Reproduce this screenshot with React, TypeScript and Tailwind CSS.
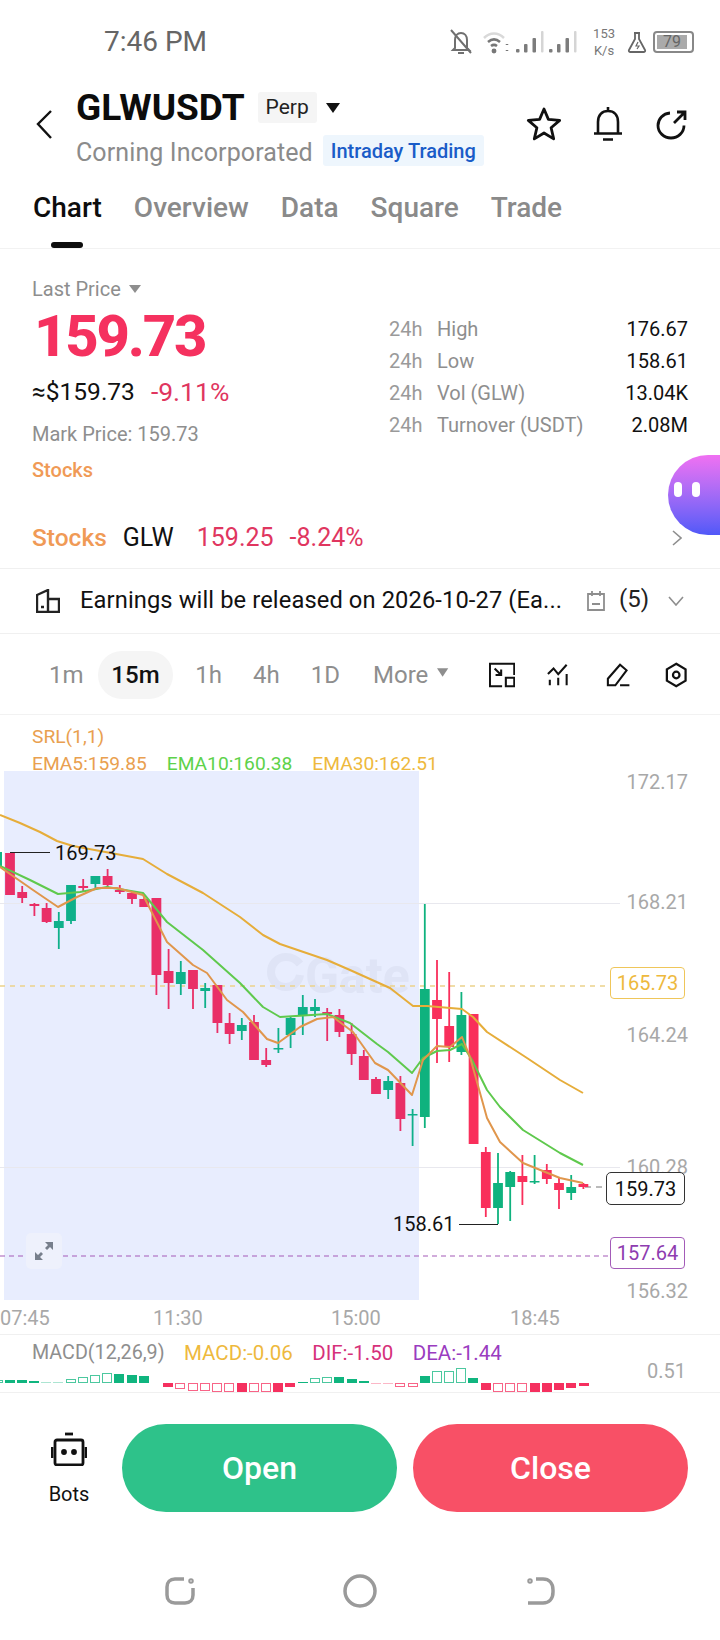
type Candle = [number, number, number, number];
type Bar = [number, number, "g" | "r", "f" | "h" | "t"];

// high, body top, body bottom, low (page y); colour per index below
const candles: Candle[] = [
  [853, 853, 895, 895], [886, 892, 898, 903], [903, 904, 906, 916], [903, 908, 922, 923],
  [912, 921, 928, 949], [885, 885, 921, 924], [879, 886, 888, 891], [876, 876, 884, 888],
  [869, 876, 885, 887], [885, 890, 892, 894], [892, 893, 899, 904], [895, 899, 907, 907],
  [898, 898, 975, 995], [949, 971, 983, 1009], [961, 972, 984, 995], [970, 970, 989, 1009],
  [983, 988, 991, 1008], [985, 985, 1023, 1033], [1013, 1023, 1034, 1044], [1018, 1025, 1031, 1040],
  [1015, 1022, 1060, 1060], [1048, 1060, 1065, 1067], [1028, 1048, 1049, 1053], [1017, 1018, 1035, 1048],
  [995, 1007, 1015, 1035], [999, 1007, 1011, 1017], [1008, 1012, 1014, 1041], [1009, 1015, 1032, 1037],
  [1023, 1034, 1054, 1065], [1050, 1056, 1080, 1080], [1077, 1079, 1094, 1094], [1076, 1081, 1090, 1099],
  [1076, 1083, 1119, 1131], [1109, 1114, 1115, 1146], [904, 989, 1117, 1128], [960, 1000, 1019, 1063],
  [972, 1026, 1047, 1062], [992, 1015, 1052, 1055], [1014, 1014, 1144, 1144], [1147, 1152, 1208, 1217],
  [1153, 1183, 1208, 1224], [1171, 1172, 1187, 1221], [1155, 1176, 1182, 1205], [1155, 1181, 1182, 1184],
  [1164, 1170, 1179, 1184], [1178, 1183, 1190, 1209], [1175, 1187, 1193, 1200], [1183, 1184, 1187, 1189],
];
const greenCandles = [4, 5, 7, 14, 16, 19, 22, 23, 24, 25, 31, 33, 34, 37, 40, 41, 43, 46];

const lineGold =
  "0,815 20,823 40,832 57,841 73,846 100,851 143,859 167,874 203,893 240,917 263,935 280,944 327,960 350,970 390,988 413,1006 427,1006 462,1009 473,1017 487,1032 527,1058 560,1080 583,1093";
const lineGreen =
  "0,866 30,880 58,894 80,892 107,887 143,893 167,922 203,950 240,983 263,1007 280,1017 327,1014 350,1023 377,1044 388,1052 412,1073 423,1058 437,1051 450,1050 462,1044 472,1060 487,1090 500,1107 523,1130 560,1153 583,1165";
const lineOrange =
  "0,867 33,890 58,907 77,897 97,888 117,888 143,895 167,942 193,965 207,973 227,1000 243,1012 267,1039 278,1043 300,1027 317,1019 333,1017 353,1032 375,1063 388,1070 412,1095 423,1060 437,1046 450,1047 462,1037 470,1057 487,1118 500,1142 523,1163 560,1178 583,1183";

const macdBars: Bar[] = [
  [-2, 3, "g", "h"], [10, 3, "g", "f"], [22, 3, "g", "f"], [34, 2, "g", "f"], [46, 1, "g", "t"], [58, 1, "g", "t"],
  [71, 4, "g", "h"], [83, 6, "g", "h"], [95, 8, "g", "h"], [107, 10, "g", "h"], [119, 9, "g", "f"], [132, 8, "g", "f"], [144, 7, "g", "f"],
  [168, 4, "r", "f"], [180, 6, "r", "h"], [193, 8, "r", "h"], [205, 8, "r", "h"], [217, 9, "r", "h"], [229, 9, "r", "h"], [242, 9, "r", "f"],
  [254, 9, "r", "h"], [266, 9, "r", "h"], [278, 9, "r", "f"], [290, 4, "r", "f"],
  [303, 1, "g", "f"], [315, 5, "g", "h"], [327, 6, "g", "h"], [339, 6, "g", "f"], [352, 4, "g", "f"], [364, 2, "g", "f"],
  [376, 1, "r", "t"], [388, 1, "r", "t"], [400, 4, "r", "h"], [413, 4, "r", "h"],
  [425, 7, "g", "f"], [437, 12, "g", "h"], [449, 12, "g", "h"], [461, 15, "g", "h"], [473, 5, "g", "f"],
  [486, 7, "r", "f"], [498, 9, "r", "h"], [510, 9, "r", "h"], [522, 9, "r", "h"], [535, 9, "r", "f"], [547, 9, "r", "f"], [559, 7, "r", "f"], [571, 5, "r", "f"], [584, 3, "r", "f"],
];

const stats = [
  { label: "High", value: "176.67" },
  { label: "Low", value: "158.61" },
  { label: "Vol (GLW)", value: "13.04K" },
  { label: "Turnover (USDT)", value: "2.08M" },
];

const Signal = () => (
  <svg width="30" height="26" viewBox="0 0 30 26" fill="#7c7c7c">
    <rect x="0" y="20" width="3.500" height="3.500" rx="1" />
    <rect x="8" y="15" width="3.500" height="8.500" rx="1" />
    <rect x="16.500" y="9" width="3.500" height="14.500" rx="1" />
    <rect x="25" y="2" width="2.500" height="21.500" rx="1" fill="#d5d5d5" />
  </svg>
);

const StatusBar = () => (
  <div className="h-[82px] flex items-center pl-[104px] pr-[26px] pt-[1px]">
    <span className="text-[28px] text-[#666666]">7:46 PM</span>
    <div className="ml-auto flex items-center">
      <svg width="24" height="26" viewBox="0 0 24 26" fill="none" stroke="#707070" strokeWidth="2">
        <path d="M6 19V11c0-4 2.500-7 6-7s6 3 6 7v8l2 2H4z" />
        <path d="M9 24h6M2 1l20 23" />
      </svg>
      <svg className="ml-[10px]" width="27" height="26" viewBox="0 0 27 26" fill="none" stroke="#777777" strokeWidth="2.500">
        <path d="M1 9c6-6 14-6 20 0" stroke="#d9d9d9" />
        <path d="M5 13c4-3.500 8-3.500 12 0M8 17c2-1.500 4-1.500 6 0" />
        <circle cx="11" cy="22" r="1.200" />
        <path d="M24 15v1M24 21v1" />
      </svg>
      <div className="ml-[6px]"><Signal /></div>
      <div className="ml-[3px]"><Signal /></div>
      <div className="ml-[14px] flex flex-col items-center text-[13px] leading-[17px] text-[#777777]">
        <span>153</span>
        <span>K/s</span>
      </div>
      <svg className="ml-[12px]" width="20" height="22" viewBox="0 0 20 22" fill="none" stroke="#666666" strokeWidth="1.800">
        <path d="M7 2h6M8 2v6L2 19c-.5 1 0 2 1 2h14c1 0 1.500-1 1-2L12 8V2" />
        <path d="M11 11l-2 4h3l-2 3" strokeWidth="1.200" />
      </svg>
      <div className="ml-[6px] w-[41px] h-[22px] rounded-[4px] border-2 border-[#888888] p-[2px] flex">
        <div className="w-[30px] bg-[#aaaaaa] flex items-center justify-center text-[16px] leading-none text-[#666666]">79</div>
      </div>
    </div>
  </div>
);

const Header = () => (
  <div className="h-[96px] flex pl-[35px] pr-[33px]">
    <svg className="mt-[27px]" width="18" height="30" viewBox="0 0 18 30" fill="none" stroke="#111111" strokeWidth="2.400">
      <path d="M16 2L3 15l13 14" />
    </svg>
    <div className="ml-[23px] mt-[9px] flex flex-col">
      <div className="flex items-center h-[33px]">
        <span className="text-[37px] font-bold leading-none text-[#0c0c0c]">GLWUSDT</span>
        <span className="ml-[13px] h-[31px] px-[8px] flex items-center rounded-[3px] bg-[#f5f5f5] text-[21px] text-[#222222]">Perp</span>
        <svg className="ml-[9px]" width="14" height="10" viewBox="0 0 14 10" fill="#111111"><path d="M0 0h14L7 10z" /></svg>
      </div>
      <div className="flex items-center mt-[11px] h-[31px]">
        <span className="mt-[4px] text-[25px] tracking-[0.1px] text-[#8b8b8b]">Corning Incorporated</span>
        <span className="ml-[10px] h-[31px] px-[8px] flex items-center rounded-[3px] bg-[#eef6fd] text-[20px] font-medium text-[#1a5cc8]">Intraday Trading</span>
      </div>
    </div>
    <div className="ml-auto mt-[25px] flex items-start">
      <svg width="36" height="34" viewBox="0 0 36 34" fill="none" stroke="#111111" strokeWidth="2.800" strokeLinejoin="round">
        <path d="M18 2l4.400 10.400 11.300 1-8.600 7.400 2.600 11.100L18 26l-9.700 5.900 2.600-11.100-8.600-7.400 11.300-1z" />
      </svg>
      <svg className="ml-[31px]" width="30" height="34" viewBox="0 0 30 34" fill="none" stroke="#111111" strokeWidth="2.600">
        <path d="M15 0v4M5 26V15C5 8 9 4 15 4s10 4 10 11v11M1 26.500h28M10 32.500h10" />
      </svg>
      <svg className="ml-[33px] mt-[3px]" width="31" height="30" viewBox="0 0 31 30" fill="none" stroke="#111111" strokeWidth="2.800">
        <path d="M14 3C7 3.500 2 9 2 15.500 2 22.500 8 28 15 28s13-5.500 13-12.500" />
        <path d="M18 13L29 2M21 2h8v8" />
      </svg>
    </div>
  </div>
);

const Tabs = () => (
  <div className="h-[71px] flex pl-[33px] gap-[32px] border-b border-[#f2f2f2]">
    <div className="flex flex-col items-center">
      <span className="text-[28px] leading-[60px] font-medium text-[#0d0d0d]">Chart</span>
      <span className="mt-[4px] w-[32px] h-[6px] rounded-full bg-[#0d0d0d]"></span>
    </div>
    <span className="text-[28px] leading-[60px] font-medium text-[#8a8a8a]">Overview</span>
    <span className="text-[28px] leading-[60px] font-medium text-[#8a8a8a]">Data</span>
    <span className="text-[28px] leading-[60px] font-medium text-[#8a8a8a]">Square</span>
    <span className="text-[28px] leading-[60px] font-medium text-[#8a8a8a]">Trade</span>
  </div>
);

const PriceInfo = () => (
  <div className="h-[259px] flex pl-[32px] pr-[32px]">
    <div className="flex flex-col">
      <div className="mt-[28px] flex items-center h-[24px]">
        <span className="text-[20px] text-[#8e8e8e]">Last Price</span>
        <svg className="ml-[8px]" width="12" height="8" viewBox="0 0 12 8" fill="#8e8e8e"><path d="M0 0h12L6 8z" /></svg>
      </div>
      <span className="mt-[2px] ml-[2px] text-[58px] leading-[66px] font-extrabold text-[#f5315f] tracking-[-2.200px]">159.73</span>
      <div className="mt-[8px] flex items-center h-[30px]">
        <span className="text-[24.500px] text-[#111111]">≈$159.73</span>
        <span className="ml-[16px] text-[26.500px] text-[#e0365f]">-9.11%</span>
      </div>
      <span className="mt-[14px] text-[20px] leading-[26px] text-[#8e8e8e]">Mark Price: 159.73</span>
      <span className="mt-[10px] text-[20px] leading-[26px] font-medium text-[#f09a56]">Stocks</span>
    </div>
    <div className="ml-auto mt-[64px] w-[299px] flex flex-col">
      {stats.map((row) => (
        <div key={row.label} className="h-[32px] flex items-center text-[20px]">
          <span className="w-[48px] text-[#9a9a9a]">24h</span>
          <span className="text-[#8e8e8e]">{row.label}</span>
          <span className="ml-auto text-[#111111]">{row.value}</span>
        </div>
      ))}
    </div>
  </div>
);

const StocksRow = () => (
  <div className="h-[61px] flex items-center pl-[32px] pr-[38px] border-b border-[#f0f0f0] text-[25px]">
    <span className="text-[24.500px] font-medium text-[#f09a56]">Stocks</span>
    <span className="ml-[16px] text-[#111111]">GLW</span>
    <span className="ml-[23px] text-[#e0365f]">159.25</span>
    <span className="ml-[16px] text-[#e0365f]">-8.24%</span>
    <svg className="ml-auto" width="10" height="16" viewBox="0 0 10 16" fill="none" stroke="#8e8e8e" strokeWidth="1.600"><path d="M1 1l8 7-8 7" /></svg>
  </div>
);

const EarningsRow = () => (
  <div className="h-[65px] flex items-center pl-[36px] pr-[36px] border-b border-[#f0f0f0]">
    <svg width="24" height="24" viewBox="0 0 24 24" fill="none" stroke="#222222" strokeWidth="2.400">
      <path d="M1 23V6l11-5v22zM12 10h11v13H1M5 18h3" />
    </svg>
    <span className="ml-[20px] w-[481px] text-[23.700px] tracking-[0.11px] text-[#111111] whitespace-nowrap">Earnings will be released on 2026-10-27 (Ea...</span>
    <svg className="ml-[26px]" width="18" height="20" viewBox="0 0 18 20" fill="none" stroke="#8e8e8e" strokeWidth="1.800">
      <path d="M1 3h16v16H1zM5 0v5M13 0v5M5 13h8" />
    </svg>
    <span className="ml-[14px] text-[24px] text-[#222222] -mt-[4px]">(5)</span>
    <svg className="ml-auto" width="16" height="10" viewBox="0 0 16 10" fill="none" stroke="#8e8e8e" strokeWidth="1.600"><path d="M1 1l7 8 7-8" /></svg>
  </div>
);

const TimeframeRow = () => (
  <div className="h-[81px] flex items-center pl-[49px] pr-[33px] pt-[1px] border-b border-[#f2f2f2] text-[24px] text-[#8e8e8e]">
    <span>1m</span>
    <span className="ml-[14px] w-[81px] h-[48px] rounded-full bg-[#f5f5f5] flex items-center justify-center font-medium text-[#111111]">15m</span>
    <span className="ml-[22px]">1h</span>
    <span className="ml-[31px]">4h</span>
    <span className="ml-[31px]">1D</span>
    <span className="ml-[33px]">More</span>
    <svg className="ml-[9px] -mt-[4px]" width="12" height="9" viewBox="0 0 12 9" fill="#8e8e8e"><path d="M0 0h12L6 9z" /></svg>
    <svg className="ml-[40px]" width="28" height="26" viewBox="0 0 28 26" fill="none" stroke="#111111" strokeWidth="2.200">
      <path d="M14 25H1V1h26v12M6 6l7 7M13 7v6H7M18 16h9v9h-9z" />
    </svg>
    <svg className="ml-[32px]" width="24" height="24" viewBox="0 0 24 24" fill="none" stroke="#111111" strokeWidth="2.200">
      <path d="M1 11l6-6 5 6 9-10M3 17v6M12 15v8M21 11v12" />
    </svg>
    <svg className="ml-[37px]" width="26" height="26" viewBox="0 0 26 26" fill="none" stroke="#111111" strokeWidth="2.200">
      <path d="M2 24v-7L15 2l7 6L10 24zM15 24h10" />
    </svg>
    <svg className="ml-[34px]" width="24" height="26" viewBox="0 0 24 26" fill="none" stroke="#111111" strokeWidth="2.400">
      <path d="M12 1l10 6v12l-10 6-10-6V7z" />
      <circle cx="12" cy="13" r="3.500" />
    </svg>
  </div>
);

const CandleChart = () => (
  <svg className="block" width="720" height="619" viewBox="0 715 720 619">
    <rect x="4" y="771" width="415" height="529" fill="#e8edfe" />
    <path d="M0 903.500H620M0 1167.500H620" stroke="#e8e8ee" strokeWidth="1" />
    <path d="M300 964c-4-5-9-7-14-7-9 0-15 7-15 15s6 15 15 15c7 0 13-5 14-12" fill="none" stroke="#dfe4f6" strokeWidth="8" />
    <text x="305" y="993" fontSize="50" fontWeight="700" fill="#dfe4f6">Gate</text>
    <path d="M0 986H610" stroke="#ecd28a" strokeWidth="1.500" strokeDasharray="5 5" />
    <path d="M0 1256H610" stroke="#a35bb8" strokeWidth="1.200" strokeDasharray="5 4" />
    <path d="M585 1187H606" stroke="#777777" strokeWidth="1" strokeDasharray="6 5" />
    <rect x="-4" y="852" width="6" height="14" fill="#0fb584" />
    {candles.map(([high, top, bottom, low], i) => {
      const x = 10 + i * 12.2;
      const up = greenCandles.includes(i);
      const shaded = i < 34;
      const color = up ? (shaded ? "#0fb08a" : "#0fb27e") : shaded ? "#e92f67" : "#f92f5b";
      return (
        <g key={i}>
          <rect x={x - 0.9} y={high} width="1.800" height={low - high} fill={color} />
          <rect x={x - 4.9} y={top} width="9.800" height={Math.max(bottom - top, 1.5)} fill={color} />
        </g>
      );
    })}
    <polyline points={lineGold} fill="none" stroke="#e6ad3a" strokeWidth="2" strokeLinejoin="round" />
    <polyline points={lineGreen} fill="none" stroke="#5fc94d" strokeWidth="2" strokeLinejoin="round" />
    <polyline points={lineOrange} fill="none" stroke="#e0964c" strokeWidth="2" strokeLinejoin="round" />
    <path d="M10 852.500H50M459 1224.500H498" stroke="#222222" strokeWidth="1.200" />
  </svg>
);

const MacdBars = () => (
  <svg className="block" width="720" height="25" viewBox="0 1367 720 25">
    {macdBars.map(([x, h, side, kind]) => {
      const color = side === "g" ? "#10b57f" : "#f5305f";
      const y = side === "g" ? 1383 - h : 1383;
      if (kind === "f") return <rect key={x} x={x - 5} y={y} width="10" height={h} fill={color} />;
      if (kind === "t") return <rect key={x} x={x - 5} y={y} width="10" height={h} fill={color} opacity="0.35" />;
      return <rect key={x} x={x - 4.5} y={y + 0.5} width="9" height={Math.max(h - 1, 1)} fill="none" stroke={color} strokeWidth="1" opacity="0.75" />;
    })}
  </svg>
);

const ChartSection = () => (
  <div className="relative h-[619px]">
    <CandleChart />
    <div className="absolute left-[32px] top-[8px] flex flex-col text-[19.200px] leading-[27px]">
      <span className="text-[#e9a04f]">SRL(1,1)</span>
      <div className="flex gap-[20px]">
        <span className="text-[#e9a04f]">EMA5:159.85</span>
        <span className="text-[#5dd24a]">EMA10:160.38</span>
        <span className="text-[#eeb93d]">EMA30:162.51</span>
      </div>
    </div>
    <span className="absolute right-[32px] top-[54px] text-[20px] leading-[26px] text-[#a8a8a8]">172.17</span>
    <span className="absolute right-[32px] top-[174px] text-[20px] leading-[26px] text-[#a8a8a8]">168.21</span>
    <span className="absolute right-[32px] top-[307px] text-[20px] leading-[26px] text-[#a8a8a8]">164.24</span>
    <span className="absolute right-[32px] top-[439px] text-[20px] leading-[26px] text-[#a8a8a8]">160.28</span>
    <span className="absolute right-[32px] top-[563px] text-[20px] leading-[26px] text-[#a8a8a8]">156.32</span>
    <span className="absolute left-[55px] top-[125px] text-[20px] leading-[26px] text-[#111111]">169.73</span>
    <span className="absolute left-[393px] top-[496px] text-[20px] leading-[26px] text-[#111111]">158.61</span>
    <span className="absolute left-[610px] top-[252px] w-[75px] h-[32px] rounded-[4px] border border-[#efc65a] bg-white flex items-center justify-center text-[20px] text-[#eeb93d]">165.73</span>
    <span className="absolute left-[606px] top-[457px] w-[79px] h-[33px] rounded-[5px] border border-[#333333] bg-white flex items-center justify-center text-[20px] text-[#111111]">159.73</span>
    <span className="absolute left-[610px] top-[522px] w-[75px] h-[32px] rounded-[4px] border border-[#a35bb8] bg-white flex items-center justify-center text-[20px] text-[#8e3cb0]">157.64</span>
    <div className="absolute left-[26px] top-[518px] w-[36px] h-[36px] rounded-[5px] bg-[#eef1fc] flex items-center justify-center">
      <svg width="20" height="20" viewBox="0 0 20 20" fill="#777f8c">
        <path d="M11 1h8v8l-3-3-3 3-2-2 3-3zM9 19H1v-8l3 3 3-3 2 2-3 3z" />
      </svg>
    </div>
    <div className="absolute left-0 right-0 bottom-[3px] h-[26px] text-[20px] leading-[26px] text-[#a8a8a8]">
      <span className="absolute left-0">07:45</span>
      <span className="absolute left-[153px]">11:30</span>
      <span className="absolute left-[331px]">15:00</span>
      <span className="absolute left-[510px]">18:45</span>
    </div>
  </div>
);

const MacdPanel = () => (
  <div className="relative h-[59px] border-y border-[#f0f0f0]">
    <div className="pl-[32px] flex gap-[19.500px] h-[32px] pt-[4px] items-center text-[20.500px]">
      <span className="text-[19.700px] text-[#8e8e8e]">MACD(12,26,9)</span>
      <span className="text-[#eeb93d]">MACD:-0.06</span>
      <span className="text-[#d6317a]">DIF:-1.50</span>
      <span className="text-[#9a3cc0]">DEA:-1.44</span>
    </div>
    <MacdBars />
    <span className="absolute right-[34px] top-[23px] text-[20px] leading-[26px] text-[#a8a8a8]">0.51</span>
  </div>
);

const ActionBar = () => (
  <div className="h-[119px] flex pl-[49px] pr-[32px] pt-[31px]">
    <div className="w-[40px] flex flex-col items-center pt-[8px]">
      <svg width="36" height="34" viewBox="0 0 36 34" fill="none" stroke="#111111" strokeWidth="2.800">
        <path d="M14 2h8" />
        <rect x="4" y="8" width="28" height="25" rx="2" />
        <path d="M1 15v11M35 15v11" />
        <circle cx="13" cy="20" r="1.500" fill="#111111" />
        <circle cx="23" cy="20" r="1.500" fill="#111111" />
      </svg>
      <span className="mt-[15px] text-[20px] leading-[26px] text-[#111111]">Bots</span>
    </div>
    <button className="ml-[33px] w-[275px] h-[88px] rounded-full bg-[#2ec28a] text-[32px] font-medium text-white">Open</button>
    <button className="ml-[16px] w-[275px] h-[88px] rounded-full bg-[#f85066] text-[32px] font-medium text-white">Close</button>
  </div>
);

const NavBar = () => (
  <div className="h-[128px] flex items-start pt-[64px] pl-[164px]">
    <svg width="32" height="30" viewBox="0 0 32 30" fill="none" stroke="#9a9a9a" strokeWidth="3.500">
      <path d="M20 3H11C6 3 3 6 3 11v8c0 5 3 8 8 8h10c5 0 8-3 8-8v-7" />
      <circle cx="27" cy="5" r="1" />
    </svg>
    <svg className="ml-[147px] -mt-[2px]" width="34" height="34" viewBox="0 0 34 34" fill="none" stroke="#9a9a9a" strokeWidth="3.500">
      <circle cx="17" cy="17" r="15" />
    </svg>
    <svg className="ml-[150px]" width="28" height="30" viewBox="0 0 28 30" fill="none" stroke="#9a9a9a" strokeWidth="3.500">
      <path d="M9 3h7c6 0 10 4 10 11v2c0 7-4 11-10 11H1" />
      <circle cx="3" cy="5" r="1" />
    </svg>
  </div>
);

export default function App() {
  return (
    <div className="relative w-[720px] h-[1640px] bg-white overflow-hidden font-[Roboto,sans-serif]">
      <StatusBar />
      <Header />
      <Tabs />
      <PriceInfo />
      <StocksRow />
      <EarningsRow />
      <TimeframeRow />
      <ChartSection />
      <MacdPanel />
      <ActionBar />
      <NavBar />
      <div className="absolute left-[668px] top-[455px] w-[92px] h-[80px] rounded-[40px] bg-gradient-to-b from-[#f070f2] to-[#5058f8] flex gap-[10px] pt-[27px] pl-[6px]">
        <span className="w-[8px] h-[15px] rounded-full bg-white"></span>
        <span className="w-[8px] h-[15px] rounded-full bg-white"></span>
      </div>
    </div>
  );
}
